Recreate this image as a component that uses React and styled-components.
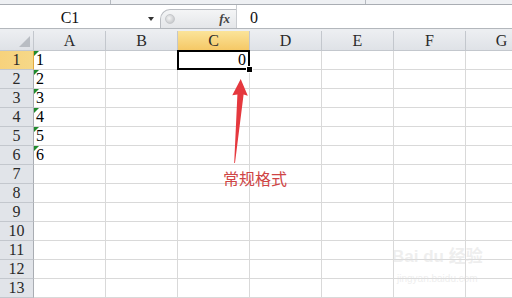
import styled, { createGlobalStyle, css } from "styled-components"

const GlobalStyle = createGlobalStyle`
    html, body {
        margin: 0;
        padding: 0;
        background: #ffffff;
    }
`

const Window = styled.div`
    position: relative;
    width: 512px;
    height: 298px;
    overflow: hidden;
    background: #ffffff;
    display: flex;
    flex-direction: column;
    font-family: "Liberation Serif", "DejaVu Serif", serif;
`

const TopStrip = styled.div`
    display: flex;
    height: 4px;
    background: #eef0f3;
    border-bottom: 1px solid #a9adb3;
`

const StripPart = styled.div`
    width: ${p => p.$width}px;
    border-right: 1px solid #b6bac0;
`

const FormulaBar = styled.div`
    display: flex;
    height: 23px;
    border-bottom: 1px solid #b3b7bc;
    background: #ffffff;
`

const NameBox = styled.div`
    display: flex;
    align-items: center;
    width: 160px;
`

const NameText = styled.span`
    width: 140px;
    text-align: center;
    font-size: 16px;
    color: #111;
    padding-top: 2px;
`

const DropArrow = styled.span`
    width: 0;
    height: 0;
    margin-left: 8px;
    margin-top: 4px;
    border-left: 3px solid transparent;
    border-right: 3px solid transparent;
    border-top: 4px solid #333;
`

const FxPill = styled.div`
    display: flex;
    align-items: center;
    justify-content: space-between;
    align-self: flex-end;
    width: 76px;
    height: 19px;
    box-sizing: border-box;
    padding: 0 6px 0 4px;
    border: 1px solid #b9bcc1;
    border-right: none;
    border-bottom: none;
    border-radius: 10px 0 0 0;
    background: linear-gradient(#f4f5f6, #e4e6e9);
`

const Grip = styled.span`
    width: 8px;
    height: 8px;
    border-radius: 50%;
    background: radial-gradient(circle at 40% 40%, #f4f4f4, #b9bcc0);
    border: 1px solid #c6c8cb;
`

const FxLabel = styled.span`
    font-family: "Liberation Serif", serif;
    font-style: italic;
    font-weight: bold;
    font-size: 13px;
    color: #444;
`

const FormulaInput = styled.div`
    flex: 1;
    display: flex;
    align-items: center;
    padding-left: 13px;
    border-left: 1px solid #c9ccd0;
    font-size: 16px;
    color: #111;
    padding-top: 2px;
`

const Gap = styled.div`
    height: 2px;
    background: #eceef1;
`

const Sheet = styled.div`
    display: grid;
    grid-template-columns: 34px repeat(7, 72px);
    grid-template-rows: 20px;
    grid-auto-rows: 19px;
    font-size: 16px;
    line-height: 18px;
`

const headerBase = css`
    box-sizing: border-box;
    border-right: 1px solid #c3c7cd;
    border-bottom: 1px solid #c3c7cd;
    color: #2a2a2a;
    display: flex;
    align-items: center;
    justify-content: center;
    background: ${p => p.$active
        ? "linear-gradient(#fbe49a, #f5c866)"
        : "linear-gradient(#eceef1, #dfe2e7)"};
`

const Corner = styled.div`
    ${headerBase};
    position: relative;
    &::after {
        content: "";
        position: absolute;
        right: 3px;
        bottom: 3px;
        border-left: 11px solid transparent;
        border-bottom: 11px solid #b9bdc3;
    }
`

const ColHeader = styled.div`
    ${headerBase};
    border-bottom-color: ${p => p.$active ? "#e2a93f" : "#c3c7cd"};
`

const RowHeader = styled.div`
    ${headerBase};
    background: ${p => p.$active
        ? "linear-gradient(90deg, #f7d27c, #f6d888)"
        : "#e1e4e9"};
    border-right-color: ${p => p.$active ? "#e2a93f" : "#a9adb3"};
`

const Cell = styled.div`
    position: relative;
    box-sizing: border-box;
    border-right: 1px solid #d9d9d9;
    border-bottom: 1px solid #d9d9d9;
    padding: 0 3px 0 2px;
    display: flex;
    align-items: center;
    justify-content: ${p => p.$right ? "flex-end" : "flex-start"};
    color: #000;
    ${p => p.$flag && css`
        &::before {
            content: "";
            position: absolute;
            left: 0;
            top: 0;
            border-top: 5px solid #1f8a2c;
            border-right: 5px solid transparent;
        }
    `}
    ${p => p.$selected && css`
        z-index: 2;
        &::after {
            content: "";
            position: absolute;
            left: -1px;
            top: -1px;
            right: -1px;
            bottom: -1px;
            border: 2px solid #000;
            pointer-events: none;
        }
    `}
`

const FillHandle = styled.span`
    position: absolute;
    right: -4px;
    bottom: -4px;
    width: 5px;
    height: 5px;
    background: #000;
    border: 1px solid #fff;
    z-index: 3;
`

const Arrow = styled.svg`
    position: absolute;
    left: 228px;
    top: 76px;
    width: 24px;
    height: 90px;
    z-index: 5;
`

const Note = styled.div`
    position: absolute;
    left: 223px;
    top: 168px;
    font-family: "Noto Sans CJK SC", "Noto Sans", sans-serif;
    font-size: 16px;
    line-height: 20px;
    color: #cf4545;
    z-index: 5;
`

const Watermark = styled.div`
    position: absolute;
    left: 392px;
    top: 246px;
    display: flex;
    flex-direction: column;
    align-items: center;
    white-space: nowrap;
    color: rgba(222, 222, 222, 0.5);
    font-family: "Liberation Sans", "Noto Sans CJK SC", sans-serif;
    z-index: 4;
`

const MarkTitle = styled.div`
    font-size: 17px;
    line-height: 22px;
    font-weight: bold;
`

const MarkUrl = styled.div`
    font-size: 10px;
    line-height: 12px;
    margin-top: 5px;
`

const columns = ["A", "B", "C", "D", "E", "F", "G"]
const rows = Array.from({ length: 13 }, (_, i) => i + 1)

function App() {
    return (
        <Window>
            <GlobalStyle />
            <TopStrip>
                <StripPart $width={110} />
                <StripPart $width={254} />
            </TopStrip>

            <FormulaBar>
                <NameBox>
                    <NameText>C1</NameText>
                    <DropArrow />
                </NameBox>
                <FxPill>
                    <Grip />
                    <FxLabel>fx</FxLabel>
                </FxPill>
                <FormulaInput>0</FormulaInput>
            </FormulaBar>

            <Gap />

            <Sheet>
                <Corner />
                {columns.map(c => (
                    <ColHeader key={c} $active={c === "C"}>{c}</ColHeader>
                ))}
                {rows.map(r => [
                    <RowHeader key={"h" + r} $active={r === 1}>{r}</RowHeader>,
                    ...columns.map(c => {
                        const isA = c === "A" && r <= 6
                        const isSel = c === "C" && r === 1
                        return (
                            <Cell
                                key={c + r}
                                $flag={isA}
                                $selected={isSel}
                                $right={isSel}
                            >
                                {isA ? r : isSel ? "0" : ""}
                                {isSel && <FillHandle />}
                            </Cell>
                        )
                    })
                ])}
            </Sheet>

            <Arrow viewBox="0 0 24 90">
                <polygon
                    points="12.7,3 19.8,19.8 15.6,18.4 7,87 6.2,87 9.4,18.4 4.3,19.2"
                    fill="#e5383e"
                />
            </Arrow>

            <Note>常规格式</Note>

            <Watermark>
                <MarkTitle>Bai du 经验</MarkTitle>
                <MarkUrl>jingyan.baidu.com</MarkUrl>
            </Watermark>
        </Window>
    )
}

export default App
